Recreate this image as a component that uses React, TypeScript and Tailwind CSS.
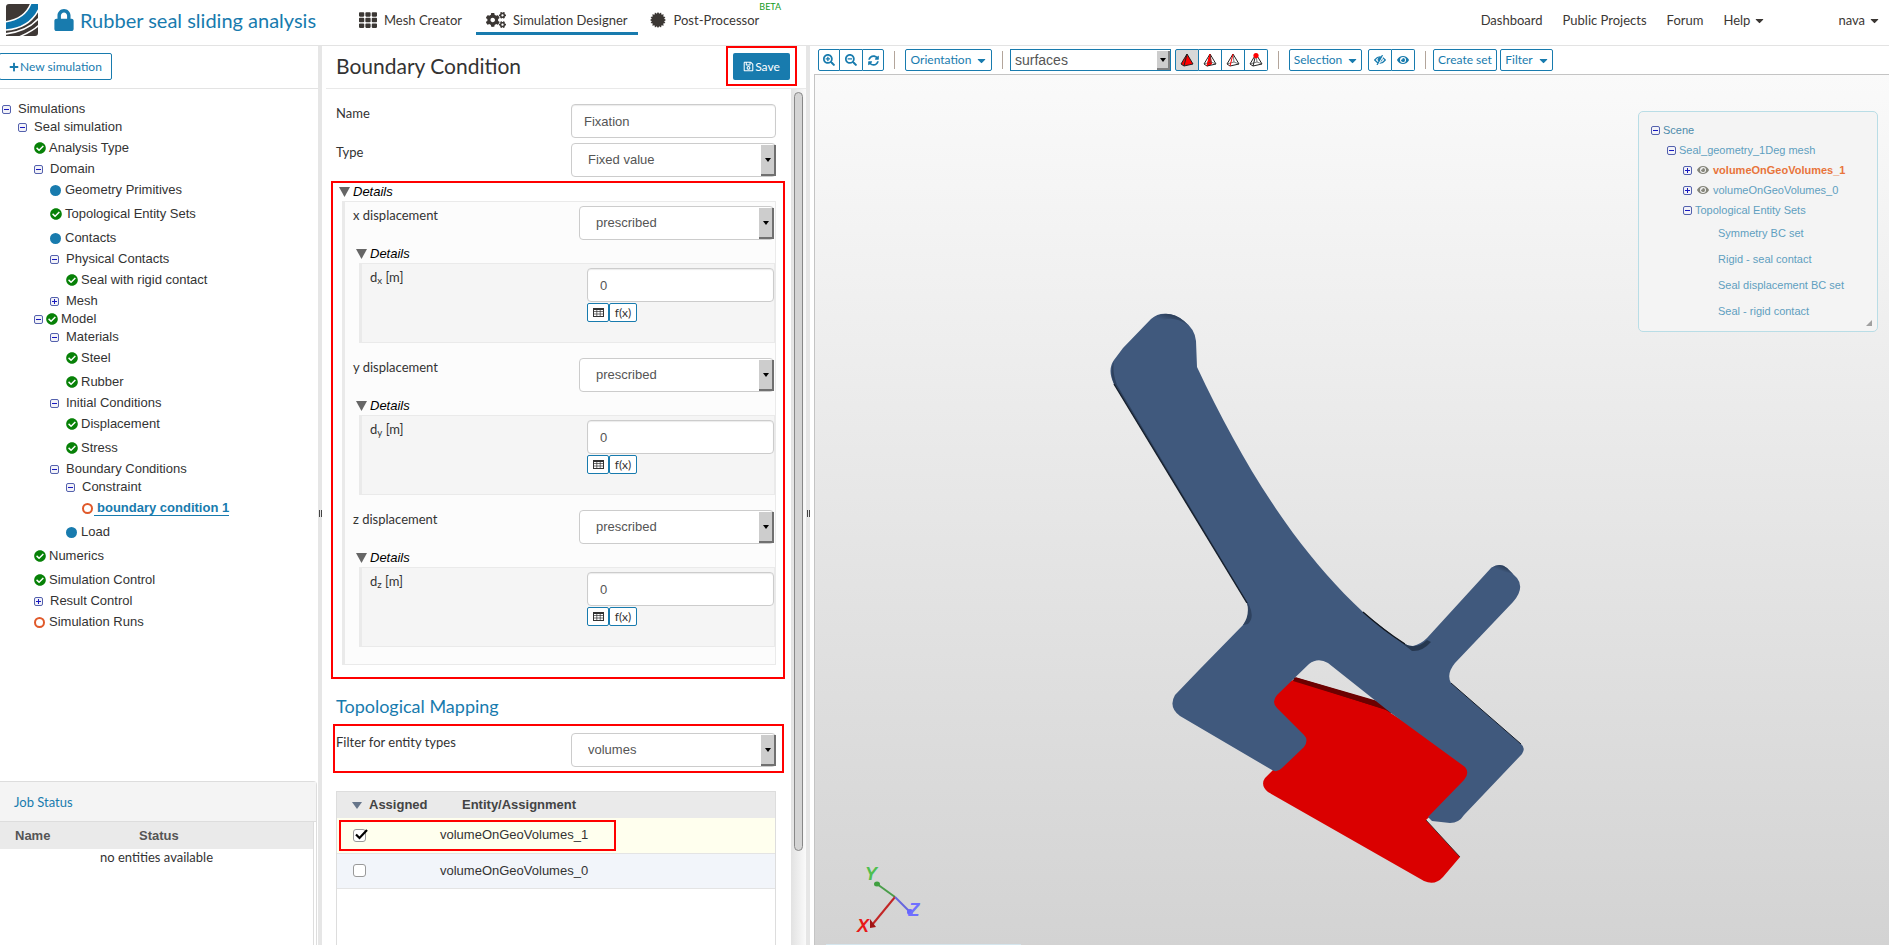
import { useState, type ReactNode } from "react";
import {
  FaCaretDown,
  FaCheckCircle,
  FaCogs,
  FaEye,
  FaLock,
  FaPlus,
  FaRegSave,
  FaSearchMinus,
  FaSearchPlus,
  FaSyncAlt,
  FaTh,
} from "react-icons/fa";

type Status = "ok" | "info" | "open";

interface TreeItem {
  label: string;
  level: number;
  toggle?: "plus" | "minus";
  status?: Status;
  active?: boolean;
}

const simulationTree: TreeItem[] = [
  { label: "Simulations", level: 0, toggle: "minus" },
  { label: "Seal simulation", level: 1, toggle: "minus" },
  { label: "Analysis Type", level: 2, status: "ok" },
  { label: "Domain", level: 2, toggle: "minus" },
  { label: "Geometry Primitives", level: 3, status: "info" },
  { label: "Topological Entity Sets", level: 3, status: "ok" },
  { label: "Contacts", level: 3, status: "info" },
  { label: "Physical Contacts", level: 3, toggle: "minus" },
  { label: "Seal with rigid contact", level: 4, status: "ok" },
  { label: "Mesh", level: 3, toggle: "plus" },
  { label: "Model", level: 2, toggle: "minus", status: "ok" },
  { label: "Materials", level: 3, toggle: "minus" },
  { label: "Steel", level: 4, status: "ok" },
  { label: "Rubber", level: 4, status: "ok" },
  { label: "Initial Conditions", level: 3, toggle: "minus" },
  { label: "Displacement", level: 4, status: "ok" },
  { label: "Stress", level: 4, status: "ok" },
  { label: "Boundary Conditions", level: 3, toggle: "minus" },
  { label: "Constraint", level: 4, toggle: "minus" },
  { label: "boundary condition 1", level: 5, status: "open", active: true },
  { label: "Load", level: 4, status: "info" },
  { label: "Numerics", level: 2, status: "ok" },
  { label: "Simulation Control", level: 2, status: "ok" },
  { label: "Result Control", level: 2, toggle: "plus" },
  { label: "Simulation Runs", level: 2, status: "open" },
];

const indent = ["pl-[2px]", "pl-[18px]", "pl-[34px]", "pl-[50px]", "pl-[66px]", "pl-[82px]"];

const entitySets = ["Symmetry BC set", "Rigid - seal contact", "Seal displacement BC set", "Seal - rigid contact"];

// 16 teeth, alternating between the outer and inner radius
const sealPoints = Array.from({ length: 32 }, (_, i) => {
  const r = i % 2 === 0 ? 8 : 6.3;
  const a = (i * Math.PI) / 16;
  return `${(8 + r * Math.cos(a)).toFixed(2)},${(8 + r * Math.sin(a)).toFixed(2)}`;
}).join(" ");

function Logo() {
  return (
    <svg viewBox="0 0 32 32" className="h-8 w-8 shrink-0" aria-label="SimScale">
      <defs>
        <clipPath id="logo-clip">
          <path d="M3 0H32V29Q32 32 29 32H0V3Q0 0 3 0Z" />
        </clipPath>
      </defs>
      <g clipPath="url(#logo-clip)">
        <rect width="32" height="32" fill="#3e3835" />
        <path d="M25 -1H33V5C27 17 16 25 -1 26V18C12 16 21 10 25 -1Z" fill="#0d75ad" />
        <g fill="none" stroke="#fff" strokeWidth="1.5">
          <path d="M25 -1C21 10 12 16 -1 18" />
          <path d="M33 5C27 17 16 25 -1 26" />
          <path d="M33 14C26 22 16 28 -1 30" />
          <path d="M33 21C28 26 22 29 13 33" />
        </g>
      </g>
    </svg>
  );
}

function Toggle({ kind }: { kind: "plus" | "minus" }) {
  return (
    <svg viewBox="0 0 9 9" className="h-[9px] w-[9px] shrink-0" aria-hidden="true">
      <rect x="0.5" y="0.5" width="8" height="8" rx="1.5" fill="#f2f2f8" stroke="#5461ad" />
      <path d="M2 4.5H7" stroke="#1818c0" />
      {kind === "plus" && <path d="M4.5 2V7" stroke="#1818c0" />}
    </svg>
  );
}

function StatusIcon({ status }: { status: Status }) {
  if (status === "ok") return <FaCheckCircle className="h-3 w-3 shrink-0 text-[#078107]" />;
  if (status === "info") return <span className="h-[11px] w-[11px] shrink-0 rounded-full bg-[#187bae]" />;
  return <span className="h-[11px] w-[11px] shrink-0 rounded-full border-2 border-[#e0592a]" />;
}

function TreeRow({ item }: { item: TreeItem }) {
  return (
    <li className={`flex items-center ${item.toggle ? "h-[18px]" : "h-6"} ${indent[item.level]}`}>
      {item.toggle && <Toggle kind={item.toggle} />}
      {item.status && (
        <span className={`flex w-3 shrink-0 ${item.toggle ? "ml-[3px]" : ""}`}>
          <StatusIcon status={item.status} />
        </span>
      )}
      <a
        href="#"
        className={
          item.active
            ? "border-b border-[#187bae] pl-[3px] leading-[14px] font-bold text-[#187bae]"
            : item.status
              ? "pl-[3px]"
              : "pl-[7px]"
        }
      >
        {item.label}
      </a>
    </li>
  );
}

function Splitter() {
  return (
    <div className="flex w-1 shrink-0 items-center justify-center gap-px bg-[#e6e6e6] pt-9">
      <span className="h-[7px] w-px bg-[#444]" />
      <span className="h-[7px] w-px bg-[#444]" />
    </div>
  );
}

function Select({ id, value, className = "" }: { id: string; value: string; className?: string }) {
  return (
    <div className={`relative h-[34px] ${className}`}>
      <select
        id={id}
        className="h-full w-full appearance-none rounded border border-[#ccc] bg-white pr-5 pl-4 font-['Liberation_Sans',sans-serif] text-[13px] text-[#555]"
      >
        <option>{value}</option>
      </select>
      <span className="pointer-events-none absolute top-0.5 right-0 bottom-px flex w-[15px] items-center justify-center border-r-2 border-b-2 border-[#707070] bg-[#cdcdcd] text-black">
        <svg viewBox="0 0 6 4" className="h-1 w-1.5">
          <path d="M0 0H6L3 4Z" />
        </svg>
      </span>
    </div>
  );
}

function TextInput({ id, value, className = "" }: { id: string; value: string; className?: string }) {
  return (
    <input
      id={id}
      defaultValue={value}
      className={`h-[34px] rounded border border-[#ccc] bg-white px-3 font-['Liberation_Sans',sans-serif] text-[13px] text-[#555] shadow-[inset_0_1px_1px_rgba(0,0,0,0.08)] ${className}`}
    />
  );
}

function DetailsHeading() {
  return (
    <div className="flex h-[18px] items-center gap-[3px] font-['Liberation_Sans',sans-serif] text-[13px] text-black italic">
      <svg viewBox="0 0 11 10" className="h-[10px] w-[11px] fill-[#666]">
        <path d="M0 0H11L5.5 10Z" />
      </svg>
      Details
    </div>
  );
}

function Displacement({ axis }: { axis: string }) {
  return (
    <div className="mb-[15px] pl-2">
      <div className="flex items-start justify-between pr-px">
        <label htmlFor={`type-${axis}`}>{axis} displacement</label>
        <Select id={`type-${axis}`} value="prescribed" className="w-[195px]" />
      </div>
      <div className="mt-[5px] pl-[3px]">
        <DetailsHeading />
      </div>
      <div className="ml-[6px] h-[80px] border border-l-[3px] border-[#eaeaea] bg-[#f5f5f5] pt-1 pl-2">
        <div className="flex items-start justify-between">
          <label htmlFor={`value-${axis}`}>
            d<sub>{axis}</sub> [m]
          </label>
          <div className="flex w-[187px] flex-col">
            <TextInput id={`value-${axis}`} value="0" />
            <div className="mt-px flex">
              <button
                aria-label="Table input"
                className="flex h-[19px] w-[22px] items-center justify-center rounded-xs border border-[#187bae] bg-white"
              >
                <svg viewBox="0 0 11 9" className="h-[9px] w-[11px]" fill="none" stroke="#333">
                  <path d="M0 1H11" strokeWidth="2" />
                  <path d="M0.5 0V9M10.5 0V9M0 8.5H11" />
                  <path d="M0 3.5H11M0 6H11M3.8 1V9M7.2 1V9" strokeWidth="0.7" />
                </svg>
              </button>
              <button className="h-[19px] w-7 rounded-xs border border-[#187bae] bg-white text-xs leading-4">f(x)</button>
            </div>
          </div>
        </div>
      </div>
    </div>
  );
}

function ToolButton({ children, className = "", label }: { children: ReactNode; className?: string; label?: string }) {
  return (
    <button
      aria-label={label}
      className={`flex h-[22px] items-center justify-center gap-1.5 border border-[#187bae] text-xs whitespace-nowrap text-[#187bae] ${className}`}
    >
      {children}
    </button>
  );
}

function Separator() {
  return <span className="mx-[10px] h-[18px] w-px bg-[#b3a59b]" />;
}

function PickIcon({ mode }: { mode: "volume" | "face" | "edge" | "node" }) {
  return (
    <svg viewBox="0 0 14 14" className="h-[14px] w-[14px]" strokeLinejoin="round" fill="none">
      {mode === "volume" && <path d="M7 1L13 11L4 13L1 11Z" fill="#f00" />}
      {mode === "face" && <path d="M7 1L8.500 11L4 13Z" fill="#f00" stroke="#f00" />}
      <path d="M7 1L13 11L4 13L1 11Z" stroke="#222" />
      {mode !== "volume" && <path d="M1 11L8 9L13 11M7 1L8 9" stroke="#444" strokeWidth="0.7" />}
      <path d="M7 1L4 13" stroke={mode === "edge" || mode === "face" ? "#f00" : "#222"} />
      {mode === "node" && <circle cx="7" cy="2.6" r="2.6" fill="#f00" />}
    </svg>
  );
}

function Header() {
  return (
    <header className="flex h-[46px] shrink-0 items-start border-b border-[#e3e3e3] pl-[6px] text-[#3b3734]">
      <div className="flex w-[349px] shrink-0 items-center pt-1">
        <Logo />
        <FaLock className="ml-4 h-[22px] w-[20px] text-[#187bae]" />
        <h1 className="ml-[6px] text-xl leading-8 whitespace-nowrap text-[#187bae]">Rubber seal sliding analysis</h1>
      </div>
      <nav className="flex h-[35px] text-[13px]">
        <a href="#" className="flex items-center gap-[7px] pt-1 pr-[14px] pl-1">
          <FaTh className="h-[18px] w-[18px]" />
          Mesh Creator
        </a>
        <a href="#" className="flex items-center gap-[7px] border-b-[3px] border-[#187bae] px-[10px] pt-[7px]">
          <FaCogs className="h-[18px] w-5" />
          Simulation Designer
        </a>
        <a href="#" className="flex items-center gap-2 pt-1 pl-3">
          <svg viewBox="0 0 16 16" className="h-4 w-4 fill-current">
            <polygon points={sealPoints} />
          </svg>
          Post-Processor
        </a>
        <span className="text-[9px] leading-[13px] text-[#149a1c]">BETA</span>
      </nav>
      <nav className="ml-auto flex h-10 items-center gap-5 pr-[10px] text-[13px] whitespace-nowrap">
        <a href="#">Dashboard</a>
        <a href="#">Public Projects</a>
        <a href="#">Forum</a>
        <button className="flex items-center gap-[5px]">
          Help <FaCaretDown className="h-[13px] w-[9px]" />
        </button>
        <button className="ml-[54px] flex items-center gap-[5px]">
          nava <FaCaretDown className="h-[13px] w-[9px]" />
        </button>
      </nav>
    </header>
  );
}

function Sidebar() {
  return (
    <aside className="flex w-[318px] shrink-0 flex-col">
      <div className="h-[43px] shrink-0 border-b border-[#e3e3e3] pt-[7px]">
        <button className="-ml-px flex h-[27px] w-[113px] items-center justify-center gap-px rounded-xs border border-[#187bae] text-xs text-[#187bae]">
          <FaPlus className="h-[10px] w-[10px]" />
          New simulation
        </button>
      </div>
      <ul className="pt-[11px] font-['Liberation_Sans',sans-serif] text-[13px] leading-[18px] text-[#333]">
        {simulationTree.map((item) => (
          <TreeRow key={item.label} item={item} />
        ))}
      </ul>

      <section className="mt-auto mr-px h-[164px] shrink-0 rounded-tr border-t border-r border-[#ddd]">
        <h2 className="flex h-10 items-center border-b border-[#ddd] bg-[#f4f4f4] pl-[14px] text-[13px] text-[#187bae]">Job Status</h2>
        <div className="mr-[2px] h-full border-r border-[#ddd]">
          <table className="w-full table-fixed text-[13px] leading-4">
            <thead className="bg-[#eaeaea] font-['Liberation_Sans',sans-serif] text-[#555]">
              <tr className="h-[27px] text-left">
                <th className="w-[124px] pl-[15px]">Name</th>
                <th className="pl-[15px]">Status</th>
              </tr>
            </thead>
            <tbody>
              <tr>
                <td colSpan={2} className="text-center">
                  no entities available
                </td>
              </tr>
            </tbody>
          </table>
        </div>
      </section>
    </aside>
  );
}

function EntityTable() {
  const [assigned, setAssigned] = useState<Record<string, boolean>>({
    volumeOnGeoVolumes_1: true,
    volumeOnGeoVolumes_0: false,
  });

  return (
    <div className="mt-[18px] mr-[15px] ml-[14px] flex-1 border border-b-0 border-[#ddd] font-['Liberation_Sans',sans-serif] text-[13px]">
      <table className="w-full table-fixed text-left">
        <thead className="bg-[#eaeaea] text-[#444]">
          <tr className="h-[26px]">
            <th className="w-[103px] pl-[15px]">
              <span className="flex items-center gap-[7px]">
                <svg viewBox="0 0 10 7" className="h-[7px] w-[10px] fill-[#66758a]">
                  <path d="M0 0H10L5 7Z" />
                </svg>
                Assigned
              </span>
            </th>
            <th className="pl-[22px]">Entity/Assignment</th>
          </tr>
        </thead>
        <tbody>
          {Object.keys(assigned).map((name, i) => (
            <tr key={name} className={`h-[35px] border-b border-[#e4e4e4] ${i === 0 ? "bg-[#ffffee]" : "bg-[#f2f5fa]"}`}>
              <td colSpan={2} className="px-[2px]">
                <label
                  className={`flex h-[31px] w-[277px] items-center border-2 pl-3 ${i === 0 ? "border-[#f00]" : "border-transparent"}`}
                >
                  <input
                    type="checkbox"
                    checked={assigned[name]}
                    onChange={(e) => setAssigned({ ...assigned, [name]: e.target.checked })}
                    className="peer h-[13px] w-[13px] appearance-none rounded-[3px] border border-[#999] bg-white"
                  />
                  <svg
                    viewBox="0 0 13 12"
                    className="invisible -ml-[11px] h-3 w-[13px] peer-checked:visible"
                    fill="none"
                    stroke="#000"
                    strokeWidth="2.2"
                  >
                    <path d="M1 5.500L4.500 9L12 1" />
                  </svg>
                  <span className="ml-[72px] text-[#333]">{name}</span>
                </label>
              </td>
            </tr>
          ))}
        </tbody>
      </table>
    </div>
  );
}

function BoundaryConditionPanel() {
  return (
    <main className="flex w-[484px] shrink-0 flex-col text-[13px] text-[#333]">
      <div className="ml-1 flex h-[43px] shrink-0 items-start justify-between border-b border-[#e9e9e9] pr-[9px] pl-[10px]">
        <h2 className="text-[21px] leading-10">Boundary Condition</h2>
        <div className="border-2 border-[#f00] px-[5px] pt-[5px] pb-1">
          <button className="flex h-[27px] w-[57px] items-center justify-center gap-px rounded-xs bg-[#187bae] text-xs text-white">
            <FaRegSave className="h-[11px] w-[11px]" />
            Save
          </button>
        </div>
      </div>
      <div className="flex min-h-0 flex-1">
        <form className="flex min-w-0 flex-1 flex-col overflow-hidden pt-[15px]" onSubmit={(e) => e.preventDefault()}>
          <div className="mb-[5px] flex items-start justify-between pr-[15px] pl-[14px]">
            <label htmlFor="name">Name</label>
            <TextInput id="name" value="Fixation" className="w-[205px]" />
          </div>
          <div className="flex items-start justify-between pr-[15px] pl-[14px]">
            <label htmlFor="type">Type</label>
            <Select id="type" value="Fixed value" className="w-[205px]" />
          </div>

          <div className="mt-1 mr-[6px] ml-[9px] border-2 border-[#f00] pr-[7px] pb-3 pl-[6px]">
            <DetailsHeading />
            <div className="ml-[3px] border border-l-[3px] border-[#eaeaea] bg-[#fcfcfc] pt-1 pb-[2px]">
              <Displacement axis="x" />
              <Displacement axis="y" />
              <Displacement axis="z" />
            </div>
          </div>

          <h3 className="pt-[15px] pb-[6px] pl-[14px] text-lg leading-6 text-[#187bae]">Topological Mapping</h3>
          <div className="mr-[7px] ml-[11px] flex h-[49px] shrink-0 items-start justify-between border-2 border-[#f00] pt-[7px] pr-[6px] pl-px">
            <label htmlFor="filter">Filter for entity types</label>
            <Select id="filter" value="volumes" className="w-[205px]" />
          </div>
          <EntityTable />
        </form>
        <div className="flex w-[15px] shrink-0 justify-center bg-gradient-to-r from-[#e2e2e2] to-[#fafafa] pt-[3px]">
          <div className="h-[89%] w-[9px] rounded-full border border-[#888] bg-[#d4d4d4]" />
        </div>
      </div>
    </main>
  );
}

function Toolbar() {
  return (
    <div className="flex h-7 shrink-0 items-center pl-1">
      <ToolButton label="Zoom in" className="w-[22px] rounded-l-xs">
        <FaSearchPlus className="h-3 w-3" />
      </ToolButton>
      <ToolButton label="Zoom out" className="w-[22px] border-x-0">
        <FaSearchMinus className="h-3 w-3" />
      </ToolButton>
      <ToolButton label="Refresh" className="w-[22px] rounded-r-xs">
        <FaSyncAlt className="h-[11px] w-[11px]" />
      </ToolButton>
      <Separator />
      <ToolButton className="w-[87px] rounded-xs">
        Orientation <FaCaretDown className="h-[13px] w-[9px]" />
      </ToolButton>
      <Separator />
      <div className="relative mr-1 ml-[-3px] h-[22px] w-[161px]">
        <select
          aria-label="Pick mode"
          className="h-full w-full appearance-none border border-[#187bae] bg-white pl-1 font-['Liberation_Sans',sans-serif] text-sm leading-5 text-[#555]"
        >
          <option>surfaces</option>
        </select>
        <span className="pointer-events-none absolute top-0.5 right-px bottom-px flex w-[13px] items-center justify-center border-r-2 border-b-2 border-[#808080] bg-[#cdcdcd]">
          <svg viewBox="0 0 6 4" className="h-1 w-1.5">
            <path d="M0 0H6L3 4Z" />
          </svg>
        </span>
      </div>
      <ToolButton label="Pick volumes" className="w-6 rounded-l-xs bg-[#d8d8d8]">
        <PickIcon mode="volume" />
      </ToolButton>
      <ToolButton label="Pick faces" className="w-[23px] border-l-0">
        <PickIcon mode="face" />
      </ToolButton>
      <ToolButton label="Pick edges" className="w-[23px] border-l-0">
        <PickIcon mode="edge" />
      </ToolButton>
      <ToolButton label="Pick nodes" className="w-[23px] rounded-r-xs border-l-0">
        <PickIcon mode="node" />
      </ToolButton>
      <Separator />
      <ToolButton className="w-[73px] rounded-xs">
        Selection <FaCaretDown className="h-[13px] w-[9px]" />
      </ToolButton>
      <ToolButton label="Hide" className="ml-[6px] w-6 rounded-l-xs">
        <svg viewBox="0 0 12 10" className="h-[10px] w-3" fill="none" stroke="currentColor">
          <path d="M0.700 5Q6 -1.500 11.300 5Q6 11.500 0.700 5Z" strokeWidth="1.200" />
          <circle cx="6" cy="4.500" r="2" fill="currentColor" />
          <path d="M9.500 0L4 10" stroke="#fff" strokeWidth="1.400" />
          <path d="M8.500 0L3 10" strokeWidth="1.200" />
        </svg>
      </ToolButton>
      <ToolButton label="Show" className="w-[23px] rounded-r-xs border-l-0">
        <FaEye className="h-3 w-3" />
      </ToolButton>
      <Separator />
      <ToolButton className="mr-[3px] ml-[-3px] w-16 rounded-xs">Create set</ToolButton>
      <ToolButton className="w-[53px] rounded-xs">
        Filter <FaCaretDown className="h-[13px] w-[9px]" />
      </ToolButton>
    </div>
  );
}

function Model() {
  return (
    <svg viewBox="815 75 1074 870" className="block h-full w-full" role="img" aria-label="Seal geometry">
      <defs>
        <linearGradient id="tip" x1="0" y1="1" x2="1" y2="0">
          <stop offset="0.4" stopColor="#40597d" />
          <stop offset="1" stopColor="#1d2a3d" />
        </linearGradient>
      </defs>
      {/* rigid part */}
      <path d="M1295 677L1381 702L1392 713L1340 720Z" fill="#6c0000" />
      <path
        d="M1293 680L1386 710L1480 770L1426 820L1460 857L1443 877Q1435 886 1424 881L1268 792Q1260 785 1265 778L1273 770L1260 740L1270 690Z"
        fill="#da0000"
      />
      <path d="M1294 677L1382 703L1392 713L1384 709L1293 681Z" fill="#6c0000" />
      <path d="M1426 820L1460 857" stroke="#222" strokeWidth="0.8" />
      {/* seal */}
      <path
        d="M1151 319Q1158 313 1167 314Q1176 314 1184 321Q1195 329 1196 341L1197 367C1208 391 1220 414 1233 438C1251 471 1271 503 1293 533C1314 561 1337 588 1363 612C1376 624 1390 634 1405 644Q1408 646 1413 646Q1421 644 1427 638L1491 568Q1500 562 1507 568L1517 578Q1525 588 1513 602L1455 663Q1446 674 1451 683L1521 744Q1526 748 1522 754L1464 815Q1459 823 1450 823L1432 821L1428 817L1464 780Q1470 773 1465 767L1391 713L1328 663Q1318 657 1309 664L1277 695Q1271 702 1277 708L1304 735Q1309 740 1304 747L1282 768Q1277 773 1272 770L1180 716Q1168 707 1175 695L1199 670L1243 625Q1252 615 1247 603L1114 384Q1107 370 1114 360L1123 348Z"
        fill="#40597d"
      />
      <path d="M1151 320Q1166 307 1184 321L1188 325Q1174 316 1164 320L1152 326Z" fill="url(#tip)" />
      <path d="M1491 568Q1500 562 1507 568L1513 574Q1504 570 1493 574Z" fill="url(#tip)" />
      <path d="M1114 384Q1109 372 1114 361Q1112 372 1117 385L1249 605Q1255 617 1248 624L1243 625Q1250 615 1247 603Z" fill="#2e425f" />
      <path d="M1114 384L1247 603" stroke="#17202d" strokeWidth="1.4" />
      <path d="M1363 612Q1383 630 1405 644Q1416 650 1427 640L1431 642Q1422 652 1412 651Z" fill="#263850" />
      <path d="M1363 612Q1383 630 1405 644" fill="none" stroke="#10151c" strokeWidth="1.2" />
      <path d="M1451 683L1521 744" stroke="#18202c" strokeWidth="1" />
      {/* orientation axes */}
      <g strokeWidth="2">
        <path d="M895 897L877 884" stroke="#4a9e4a" />
        <path d="M895 897L872 925" stroke="#c22626" />
        <path d="M895 897L910 912" stroke="#6666dd" />
      </g>
      <ellipse cx="877" cy="884" rx="3" ry="2.500" fill="#3f9f3f" />
      <path d="M870 919L876 927L870 928Z" fill="#a01414" />
      <circle cx="910" cy="912" r="3" fill="#6666ff" />
      <g className="font-['Liberation_Sans',sans-serif] text-[18px] font-bold italic" textAnchor="middle">
        <text x="871" y="880" fill="#4fbf4f">
          Y
        </text>
        <text x="863" y="932" fill="#e81919">
          X
        </text>
        <text x="914" y="916" fill="#6f6fff">
          Z
        </text>
      </g>
    </svg>
  );
}

function ScenePanel() {
  return (
    <div className="absolute top-[36px] right-[11px] w-60 rounded-[5px] border border-[#b9dde6] bg-[#f4f4f4] pt-2 pb-[7px] pl-3 font-['Liberation_Sans',sans-serif] text-[11px] text-[#5f9fc0]">
      <ul>
        <li className="flex h-5 items-center gap-[3px] text-[#4d8bab]">
          <Toggle kind="minus" />
          Scene
        </li>
        <li className="flex h-5 items-center gap-[3px] pl-4">
          <Toggle kind="minus" />
          Seal_geometry_1Deg mesh
        </li>
        <li className="flex h-5 items-center pl-8 font-bold text-[#e8743b]">
          <Toggle kind="plus" />
          <FaEye className="mr-1 ml-[5px] h-3 w-3 text-[#85857a]" />
          volumeOnGeoVolumes_1
        </li>
        <li className="flex h-5 items-center pl-8">
          <Toggle kind="plus" />
          <FaEye className="mr-1 ml-[5px] h-3 w-3 text-[#85857a]" />
          volumeOnGeoVolumes_0
        </li>
        <li className="flex h-5 items-center gap-[3px] pl-8">
          <Toggle kind="minus" />
          Topological Entity Sets
        </li>
        {entitySets.map((name) => (
          <li key={name} className="flex h-[26px] items-center pl-[67px]">
            {name}
          </li>
        ))}
      </ul>
      <svg viewBox="0 0 6 6" className="absolute right-[5px] bottom-[5px] h-1.5 w-1.5 fill-[#a0a0a0]">
        <path d="M6 0V6H0Z" />
      </svg>
    </div>
  );
}

export default function App() {
  return (
    <div className="flex h-screen flex-col overflow-hidden bg-white font-[Lato,sans-serif] text-[13px] leading-[18px] text-[#333]">
      <Header />
      <div className="flex min-h-0 flex-1">
        <Sidebar />
        <Splitter />
        <BoundaryConditionPanel />
        <Splitter />
        <section className="flex min-w-0 flex-1 flex-col pl-1">
          <Toolbar />
          <div className="relative min-h-0 flex-1 border-t border-l border-[#c4c4c4] bg-gradient-to-b from-[#fafafa] to-[#d3d3d3]">
            <Model />
            <ScenePanel />
            <div className="absolute bottom-0 left-[11px] h-px w-[195px] bg-[#d5e6ee]" />
          </div>
        </section>
      </div>
    </div>
  );
}
